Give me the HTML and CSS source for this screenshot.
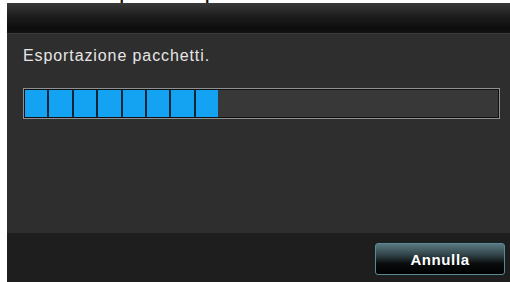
FILE: index.html
```html
<!DOCTYPE html>
<html lang="it">
<head>
  <meta charset="UTF-8" />
  <title>Esportazione pacchetti</title>
  <link rel="stylesheet" href="styles.css">
</head>
<body>
  <div class="caption"><span>Esportazione pacchetti</span></div>
  <div class="dialog">
    <div class="dialog-header"></div>
    <div class="dialog-body">
      <p class="message">Esportazione pacchetti.</p>
      <div class="progress">
        <div class="progress-track">
          <span class="block"></span>
          <span class="block"></span>
          <span class="block"></span>
          <span class="block"></span>
          <span class="block"></span>
          <span class="block"></span>
          <span class="block"></span>
          <span class="block"></span>
        </div>
      </div>
    </div>
    <div class="dialog-footer">
      <button class="btn">Annulla</button>
    </div>
  </div>
</body>
</html>
```

FILE: styles.css
```css
html, body {
  margin: 0;
  padding: 0;
  background: #ffffff;
  overflow: hidden;
  font-family: "Liberation Sans", Arial, sans-serif;
}
.caption {
  height: 3px;
  overflow: hidden;
  position: relative;
}
.caption span {
  position: absolute;
  left: 100px;
  bottom: 0;
  font-size: 16px;
  line-height: 16px;
  color: #111;
  font-weight: bold;
}
.dialog {
  margin-left: 7px;
  width: 503px;
  height: 279px;
  display: flex;
  flex-direction: column;
}
.dialog-header {
  height: 30px;
  background: linear-gradient(#3a3a3a, #1c1c1c 45%, #0d0d0d 85%, #121212);
  border-bottom: 1px solid #3a3a3a;
}
.dialog-body {
  height: 199px;
  background: #2e2e2e;
  padding: 12px 10px 0 16px;
  box-sizing: border-box;
}
.message {
  margin: 0;
  font-size: 16px;
  line-height: 19px;
  letter-spacing: 0.9px;
  color: #e6e6e6;
}
.progress {
  margin-top: 23px;
  width: 477px;
  height: 31px;
  box-sizing: border-box;
  border: 1px solid #909090;
  background: #101010;
  padding: 1px;
}
.progress-track {
  height: 100%;
  background: #383838;
  display: flex;
}
.block {
  width: 22.4px;
  height: 100%;
  background: #13a3f2;
  border-right: 2px solid #0b2436;
}
.block:last-child {
  border-right: 0;
}
.dialog-footer {
  flex: 1;
  background: #1e1e1e;
  display: flex;
  justify-content: flex-end;
  align-items: flex-start;
  padding: 10px 5px 0 0;
}
.btn {
  width: 130px;
  height: 32px;
  border: 1px solid #5d8792;
  border-radius: 3px;
  background: linear-gradient(#587880, #33464b 35%, #0a0c0d 65%, #000000);
  box-shadow: 0 0 2px #0e2a33;
  color: #ffffff;
  font-family: "Liberation Sans", Arial, sans-serif;
  font-weight: bold;
  font-size: 15px;
  letter-spacing: 0.6px;
  padding: 0;
  cursor: pointer;
}
```
